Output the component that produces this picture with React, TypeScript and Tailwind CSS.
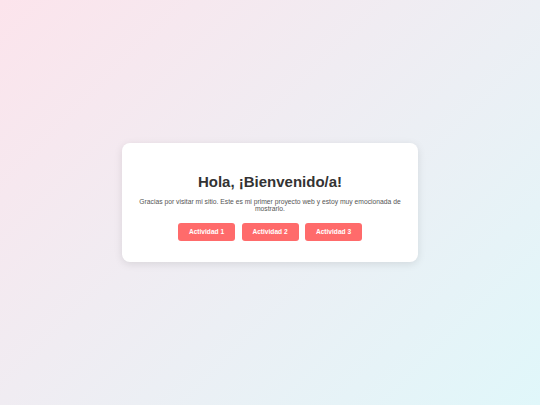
const actividades = ["Actividad 1", "Actividad 2", "Actividad 3"];

export default function App() {
    return (
        <div className="w-full h-[405px] flex items-center justify-center bg-[linear-gradient(135deg,#fce4ec,#e0f7fa)] font-['Liberation_Sans',Arial,sans-serif]">
            <div className="w-[296px] bg-white rounded-[8px] shadow-[0_2px_8px_rgba(0,0,0,0.1)] px-[15px] pt-[30px] pb-[21px] text-center">
                <h1 className="text-[15px] leading-[1.15] font-bold text-[#333]">Hola, ¡Bienvenido/a!</h1>
                <p className="mt-[7px] text-[6.75px] leading-[1.15] text-[#555]">
                    Gracias por visitar mi sitio. Este es mi primer proyecto web y estoy muy emocionada de mostrarlo.
                </p>
                <div className="mt-[10px] flex justify-center gap-[6.5px]">
                    {actividades.map((name) => (
                        <button key={name} className="w-[57px] h-[17.5px] rounded-[3px] bg-[#ff6b6b] text-white text-[6.6px] font-bold">
                            {name}
                        </button>
                    ))}
                </div>
            </div>
        </div>
    )
}
